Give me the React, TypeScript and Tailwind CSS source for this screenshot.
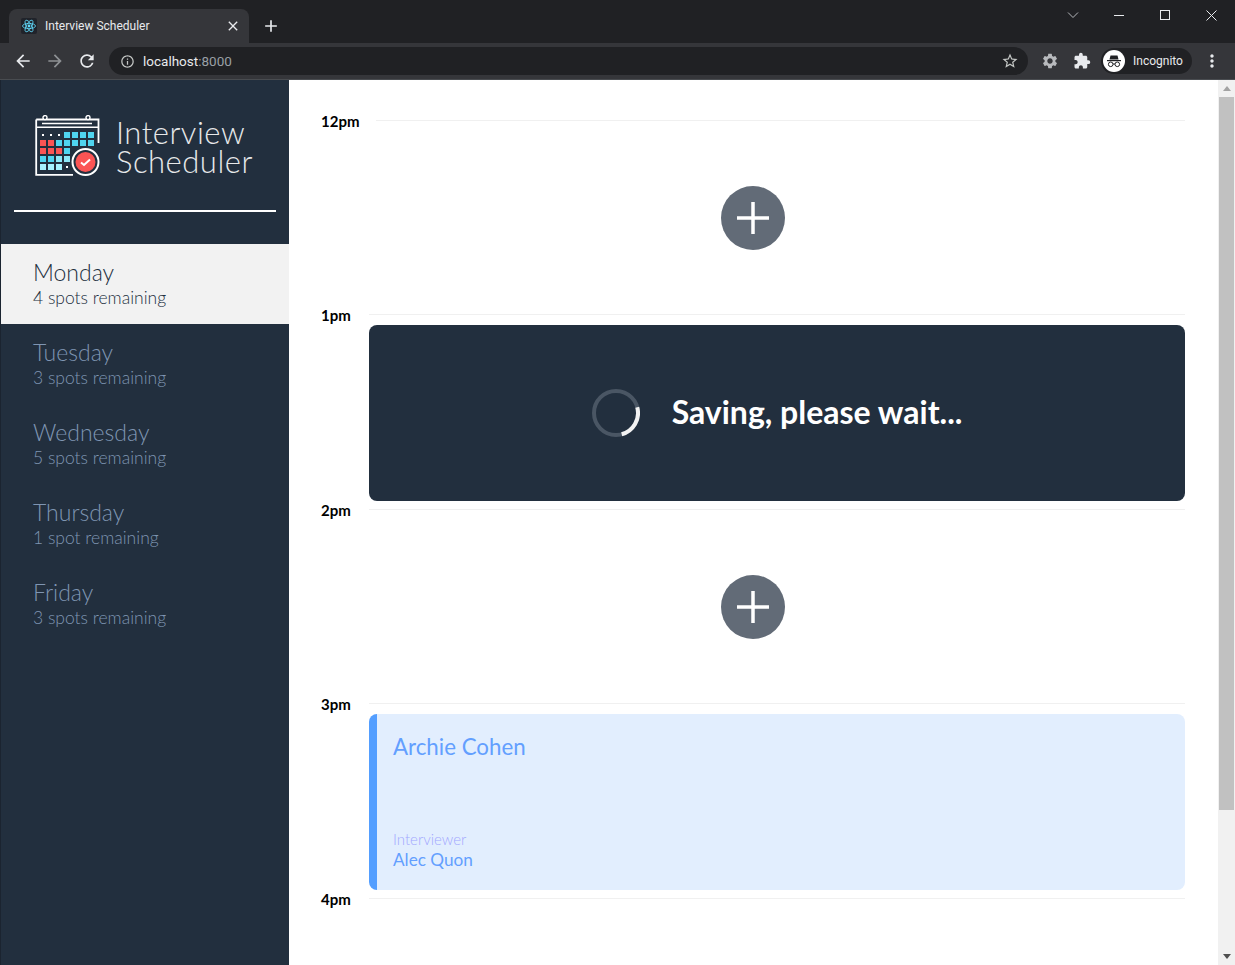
import React from 'react';
import { MdArrowBack, MdArrowForward, MdRefresh, MdInfoOutline, MdStarBorder, MdExtension, MdMoreVert, MdAdd, MdClose, MdSettings } from 'react-icons/md';

const days = [
  { name: 'Monday', spots: '4 spots remaining', selected: true },
  { name: 'Tuesday', spots: '3 spots remaining' },
  { name: 'Wednesday', spots: '5 spots remaining' },
  { name: 'Thursday', spots: '1 spot remaining' },
  { name: 'Friday', spots: '3 spots remaining' },
];

const CELLS = [
  ['d', 'd', 'd', 'c', 'c', 'c', 'c'],
  ['r', 'r', 'c', 'c', 'c', 'c', 'c'],
  ['r', 'r', 'r', 'c', '', '', ''],
  ['c', 'c', 'l', 'l', '', '', ''],
  ['p', 'p', 'p', 'd', '', '', ''],
];

const cellColor: Record<string, string> = { c: '#4fd5f0', r: '#fb5454', l: '#8ce8f8', p: '#a6f2ff' };

const Logo = () => (
  <svg width="66" height="62" viewBox="0 0 66 62" fill="none" className="shrink-0">
    <path d="M1.2 4.5H63.5V28M1.2 4.5V59.8H38" stroke="#fff" strokeWidth="1.8" />
    <path d="M7 8.5H57M1 12.2H64" stroke="#fff" strokeWidth="1.6" />
    <circle cx="10" cy="2.6" r="2" stroke="#fff" strokeWidth="1.4" fill="#222f3e" />
    <circle cx="53" cy="2.6" r="2" stroke="#fff" strokeWidth="1.4" fill="#222f3e" />
    {CELLS.map((row, y) =>
      row.map((c, x) => {
        if (!c) return null;
        if (c === 'd') return <rect key={`${x}-${y}`} x={7 + x * 8} y={19 + y * 8} width="2" height="2" fill="#fff" />;
        return <rect key={`${x}-${y}`} x={5 + x * 8} y={17 + y * 8} width="6" height="6" fill={cellColor[c]} />;
      })
    )}
    <circle cx="50.5" cy="47" r="13" fill="#222f3e" stroke="#fff" strokeWidth="2" />
    <circle cx="50.5" cy="47" r="10" fill="#fb5454" />
    <path d="M46 47.5L49 50L55 44.5" stroke="#fff" strokeWidth="2" />
  </svg>
);

const ReactFavicon = () => (
  <svg width="16" height="16" viewBox="0 0 16 16" fill="none">
    <rect width="16" height="16" rx="2" fill="#20232a" />
    <circle cx="8" cy="8" r="1.4" fill="#61dafb" />
    <g stroke="#61dafb" strokeWidth="0.8">
      <ellipse cx="8" cy="8" rx="6.5" ry="2.6" />
      <ellipse cx="8" cy="8" rx="6.5" ry="2.6" transform="rotate(60 8 8)" />
      <ellipse cx="8" cy="8" rx="6.5" ry="2.6" transform="rotate(120 8 8)" />
    </g>
  </svg>
);

const IncognitoIcon = () => (
  <svg width="16" height="16" viewBox="0 0 16 16" fill="none">
    <path d="M4.5 2.5H11.5L12.5 6.5H3.5Z" fill="#202124" />
    <rect x="1" y="7" width="14" height="1.2" fill="#202124" />
    <circle cx="4.7" cy="11.3" r="2.3" stroke="#202124" strokeWidth="1" />
    <circle cx="11.3" cy="11.3" r="2.3" stroke="#202124" strokeWidth="1" />
    <path d="M7 11H9" stroke="#202124" strokeWidth="1" />
  </svg>
);

const Chrome = () => (
  <div className="shrink-0 h-20 flex flex-col bg-[#202124] font-['Roboto',sans-serif]">
    <div className="h-[43px] flex items-end pl-[9px]">
      <div className="w-[240px] h-[34px] bg-[#35363a] rounded-t-lg flex items-center pl-[12px] pr-[8px]">
        <ReactFavicon />
        <span className="ml-2 flex-1 text-[12px] text-[#e8eaed]">Interview Scheduler</span>
        <MdClose className="text-[#e8eaed] text-base" />
      </div>
      <MdAdd className="ml-[12px] mb-[7px] text-[#e8eaed] text-[20px]" />
      <div className="flex-1 self-start flex items-center justify-end h-[30px] text-[#e8eaed]">
        <svg width="12" height="8" viewBox="0 0 12 8" fill="none" className="mr-[35px]">
          <path d="M1 1.5L6 6.5L11 1.5" stroke="#b4b7bb" />
        </svg>
        <div className="w-[10px] h-px bg-[#e8eaed] mr-[36px]" />
        <div className="w-[10px] h-[10px] border border-[#e8eaed] mr-[36px]" />
        <svg width="11" height="11" viewBox="0 0 11 11" fill="none" className="mr-[18px]">
          <path d="M0.5 0.5L10.5 10.5M10.5 0.5L0.5 10.5" stroke="#e8eaed" />
        </svg>
      </div>
    </div>
    <div className="h-[37px] bg-[#35363a] flex items-center pl-[13px] border-b border-[#494c50]">
      <MdArrowBack className="shrink-0 text-[#e8eaed] text-[20px]" />
      <MdArrowForward className="shrink-0 ml-[12px] text-[#8e9194] text-[20px]" />
      <MdRefresh className="shrink-0 ml-[12px] text-[#e8eaed] text-[20px]" />
      <div className="shrink-0 ml-[12px] w-[919px] h-7 rounded-full bg-[#202124] flex items-center pl-[11px] pr-[9px]">
        <MdInfoOutline className="text-[#c4c7c5] text-[15px]" />
        <span className="ml-[8px] flex-1 text-[13.5px] text-[#e8eaed]">
          localhost<span className="text-[#9aa0a6]">:8000</span>
        </span>
        <MdStarBorder className="text-[#c4c7c5] text-[18px]" />
      </div>
      <MdSettings className="shrink-0 ml-[13px] text-[#b8babd] text-[18px]" />
      <MdExtension className="shrink-0 ml-[14px] text-[#e8eaed] text-[18px]" />
      <div className="shrink-0 ml-[10px] w-[91px] h-[26px] rounded-full bg-[#202124] flex items-center pl-[2px]">
        <div className="w-[22px] h-[22px] rounded-full bg-white flex items-center justify-center">
          <IncognitoIcon />
        </div>
        <span className="ml-2 text-[12px] text-[#e8eaed]">Incognito</span>
      </div>
      <MdMoreVert className="shrink-0 ml-[10px] text-[#e8eaed] text-[20px]" />
    </div>
  </div>
);

const Sidebar = () => (
  <aside className="w-[289px] shrink-0 bg-[#222f3e] border-l border-[#1b2430] font-['Lato',sans-serif]">
    <div className="flex items-center h-[130px] pl-[34px] pt-[2px] gap-[15px]">
      <Logo />
      <div className="pt-px text-[31px] leading-[29px] font-light text-[#e6e8ea] tracking-[0.5px]">
        Interview
        <br />
        Scheduler
      </div>
    </div>
    <div className="mx-[13px] h-[2px] bg-white" />
    <ul className="mt-[32px]">
      {days.map(d => (
        <li
          key={d.name}
          className={`h-20 pl-[32px] pt-[15px] ${d.selected ? 'bg-[#f2f2f2] text-[#222f3e]' : 'text-[#7f95b2]'}`}
        >
          <div className="text-[23px] leading-[26px] font-light">{d.name}</div>
          <div className="text-[17.5px] leading-[26px] font-light">{d.spots}</div>
        </li>
      ))}
    </ul>
  </aside>
);

const SlotHeader = ({ time }: { time: string }) => (
  <div className="h-4 flex items-center">
    <span className="min-w-12 shrink-0 pr-[17px] pt-[2px] text-[15px] font-bold text-black">{time}</span>
    <div className="flex-1 h-px bg-[#f0f0f0]" />
  </div>
);

const AddSlot = () => (
  <div className="h-[178.5px] pt-px flex items-center justify-center">
    <button className="w-16 h-16 rounded-full bg-[#626b77] flex items-center justify-center">
      <svg width="34" height="34" viewBox="0 0 34 34" fill="none">
        <path d="M17 1V33M1 17H33" stroke="#fff" strokeWidth="3.5" />
      </svg>
    </button>
  </div>
);

const Saving = () => (
  <div className="h-[178.5px] pl-12 pt-[2px]">
    <div className="h-[176px] rounded-lg bg-[#222f3e] flex items-center justify-center gap-8">
      <svg width="48" height="48" viewBox="0 0 48 48" fill="none">
        <circle cx="24" cy="24" r="22" stroke="#4a5664" strokeWidth="4" />
        <path d="M45.25 18.3A22 22 0 0 1 29.7 45.25" stroke="#f2f2f2" strokeWidth="4" />
      </svg>
      <span className="pb-[2px] text-[32px] font-bold text-white">Saving, please wait...</span>
    </div>
  </div>
);

const Booked = () => (
  <div className="h-[178.5px] pl-12 pt-[2px]">
    <div className="h-[176px] rounded-lg bg-[#e2eefe] border-l-8 border-[#539eff] pl-4 pt-[16px] flex flex-col text-[#639fff]">
      <div className="text-[22.3px] leading-[34px]">Archie Cohen</div>
      <div className="mt-auto pb-[19px]">
        <div className="text-[15px] leading-[19px] -mt-px font-light text-[#a3a8ff]">Interviewer</div>
        <div className="text-[17.2px] leading-[22px]">Alec Quon</div>
      </div>
    </div>
  </div>
);

const Scrollbar = () => (
  <div className="w-[17px] shrink-0 bg-[#f1f1f1] flex flex-col items-center">
    <div className="h-[17px] flex items-center justify-center">
      <div className="border-x-4 border-x-transparent border-b-[5px] border-b-[#a3a3a3]" />
    </div>
    <div className="w-[15px] h-[713px] bg-[#c1c1c1]" />
    <div className="mt-auto h-[17px] flex items-center justify-center">
      <div className="border-x-4 border-x-transparent border-t-[5px] border-t-[#505050]" />
    </div>
  </div>
);

export default function App() {
  return (
    <div className="h-[965px] flex flex-col overflow-hidden bg-white">
      <Chrome />
      <div className="flex-1 flex min-h-0">
        <Sidebar />
        <main className="flex-1 pl-8 pr-[33px] pt-8 overflow-hidden font-['Lato',sans-serif]">
          <SlotHeader time="12pm" />
          <AddSlot />
          <SlotHeader time="1pm" />
          <Saving />
          <SlotHeader time="2pm" />
          <AddSlot />
          <SlotHeader time="3pm" />
          <Booked />
          <SlotHeader time="4pm" />
        </main>
        <Scrollbar />
      </div>
    </div>
  );
}
